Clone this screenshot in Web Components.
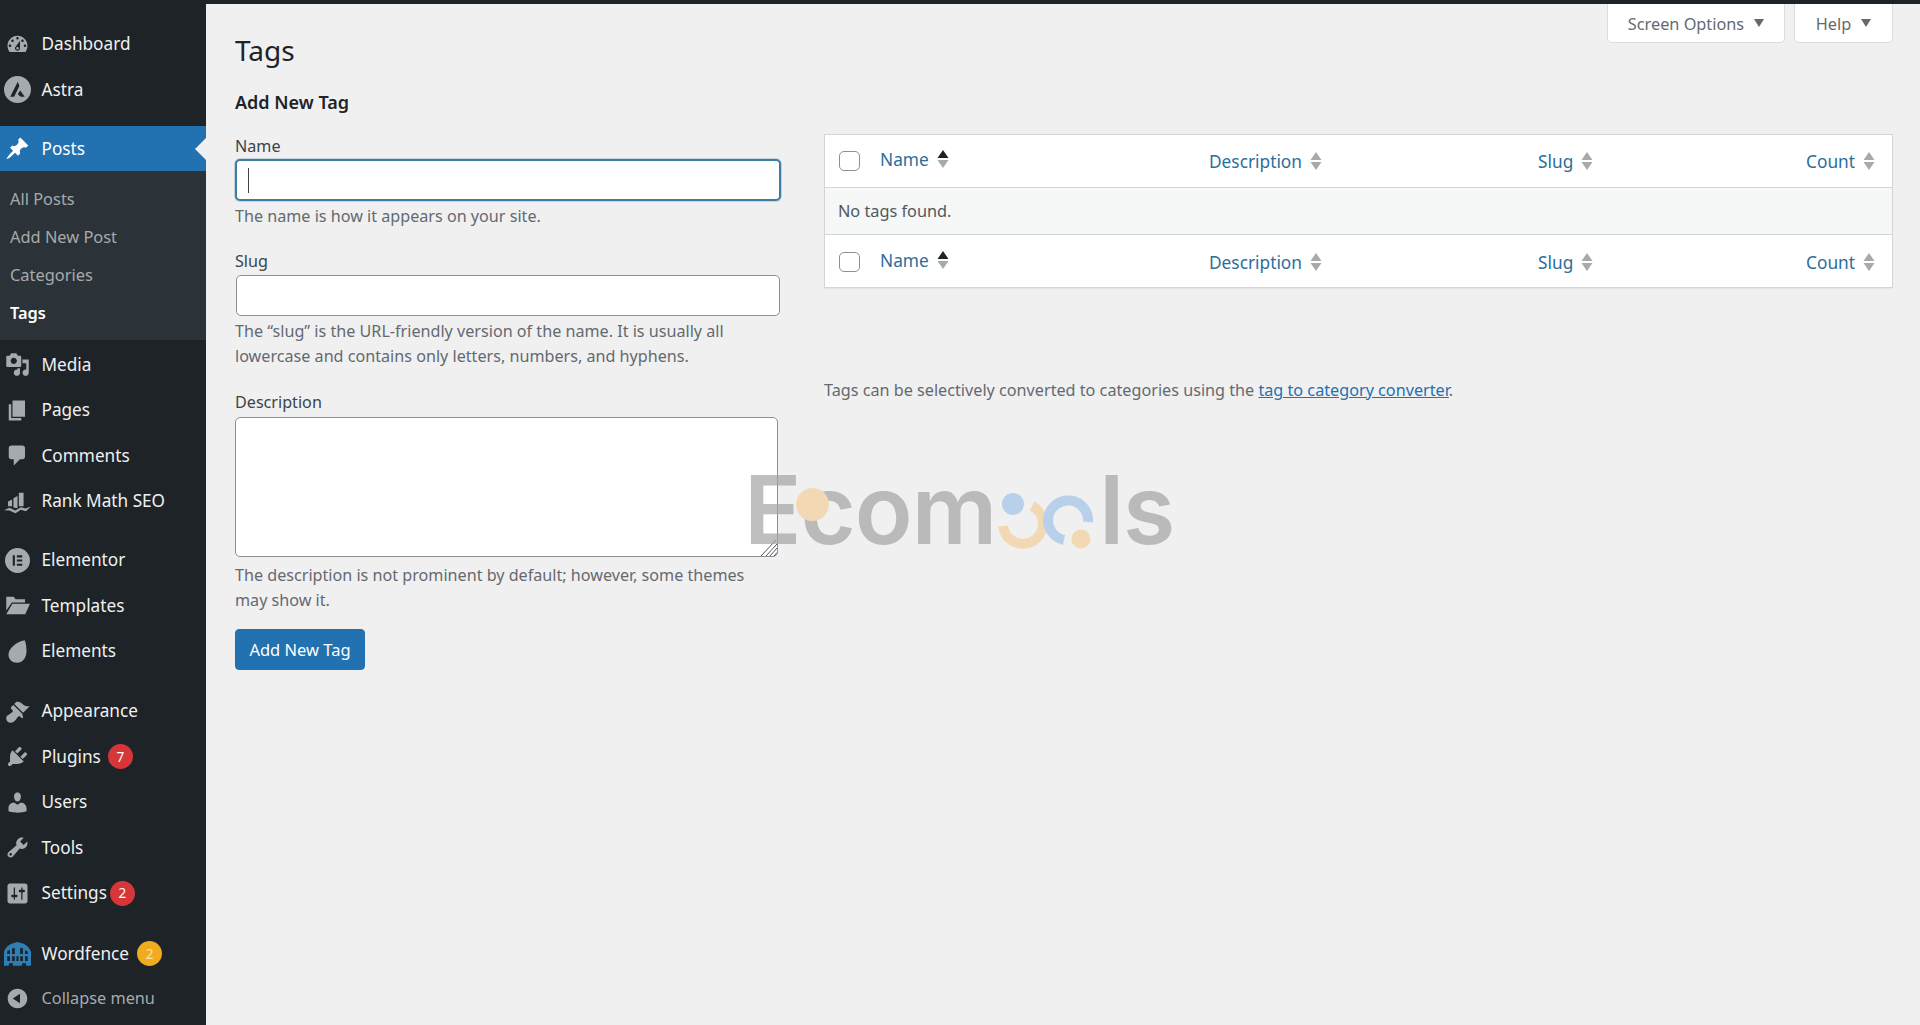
<!DOCTYPE html>
<html lang="en">
<head>
<meta charset="utf-8">
<title>Tags</title>
<style>
html, body { margin: 0; height: 100%; overflow: hidden; background: #f0f0f1; }
body { font-family: "Noto Sans", "Open Sans", sans-serif; color: #3c434a; }
</style>
</head>
<body>
<wp-shell>
  <wp-sidebar slot="side">
    <wp-menu-item label="Dashboard"><svg viewBox="0 0 20 20"><path d="M3.76 16h12.48c1.1-1.37 1.76-3.11 1.76-5 0-4.42-3.58-8-8-8s-8 3.58-8 8c0 1.89.66 3.63 1.76 5zM10 4c.55 0 1 .45 1 1s-.45 1-1 1-1-.45-1-1 .45-1 1-1zM6 6c.55 0 1 .45 1 1s-.45 1-1 1-1-.45-1-1 .45-1 1-1zm8 0c.55 0 1 .45 1 1s-.45 1-1 1-1-.45-1-1 .45-1 1-1zm-5.37 5.55L12 7v6c0 1.1-.9 2-2 2s-2-.9-2-2c0-.57.24-1.08.63-1.45zM4 10c.55 0 1 .45 1 1s-.45 1-1 1-1-.45-1-1 .45-1 1-1zm12 0c.55 0 1 .45 1 1s-.45 1-1 1-1-.45-1-1 .45-1 1-1zm-5 3c0-.55-.45-1-1-1s-1 .45-1 1 .45 1 1 1 1-.45 1-1z"/></svg></wp-menu-item>
    <wp-menu-item label="Astra"><svg viewBox="0 0 20 20" style="width:27px;height:27px"><path fill-rule="evenodd" d="M10 0a10 10 0 1 1 0 20a10 10 0 0 1 0-20zM10.200 4.200L4.600 15.400h2.900l3.900-8zM11.900 10.700l-1.700 2.900 2.200 1.800h3z"/></svg></wp-menu-item>
    <div class="sep"></div>
    <wp-menu-item label="Posts" active><svg viewBox="0 0 20 20"><path d="M10.44 3.02l1.82-1.82 6.36 6.35-1.83 1.82c-1.05-.68-2.48-.57-3.41.36l-.75.75c-.92.93-1.04 2.35-.35 3.41l-1.83 1.82-2.41-2.41-2.8 2.79c-.42.42-3.38 2.71-3.8 2.29s1.86-3.39 2.28-3.81l2.79-2.79L4.1 9.36l1.83-1.82c1.05.69 2.48.57 3.4-.36l.75-.75c.93-.92 1.05-2.35.36-3.41z"/></svg></wp-menu-item>
    <wp-submenu>
      <wp-sub-item>All Posts</wp-sub-item>
      <wp-sub-item>Add New Post</wp-sub-item>
      <wp-sub-item>Categories</wp-sub-item>
      <wp-sub-item current>Tags</wp-sub-item>
    </wp-submenu>
    <wp-menu-item label="Media"><svg viewBox="0 0 20 20"><path d="M13 11V4c0-.55-.45-1-1-1h-1.67L9 1H5L3.67 3H2c-.55 0-1 .45-1 1v7c0 .55.45 1 1 1h10c.55 0 1-.45 1-1zM7 4.500c1.38 0 2.500 1.120 2.500 2.500S8.380 9.500 7 9.500 4.500 8.380 4.500 7 5.620 4.500 7 4.500zM14 6h5v10.500c0 1.380-1.120 2.500-2.500 2.500S14 17.880 14 16.500s1.120-2.500 2.500-2.500c.17 0 .34.02.5.05V9h-3V6zm-4 8.050V13h2v3.500c0 1.380-1.120 2.500-2.500 2.500S7 17.880 7 16.500 8.120 14 9.500 14c.17 0 .34.02.5.05z"/></svg></wp-menu-item>
    <wp-menu-item label="Pages"><svg viewBox="0 0 20 20"><path d="M6 15V2h10v13H6zm-1 1h8v2H3V5h2v11z"/></svg></wp-menu-item>
    <wp-menu-item label="Comments"><svg viewBox="0 0 20 20"><path d="M5 2h9c1.1 0 2 .9 2 2v7c0 1.1-.9 2-2 2h-2l-5 5v-5H5c-1.1 0-2-.9-2-2V4c0-1.1.9-2 2-2z"/></svg></wp-menu-item>
    <wp-menu-item label="Rank Math SEO"><svg viewBox="0 0 20 20" style="width:27px;height:27px"><path d="M3 13.500V10l3-1.500v5zM7 14.500v-7l3-1.500v9zM11 13.500v-10h3.500v10zM0 16.500l4-1.800 4.500 2 4-2.500 3.500 1 4-1.500-3.800 3.500-3.700-1-4 2.500-4.500-2z"/></svg></wp-menu-item>
    <div class="sep"></div>
    <wp-menu-item label="Elementor"><svg viewBox="0 0 20 20"><path fill-rule="evenodd" d="M10 0a10 10 0 1 1 0 20a10 10 0 0 1 0-20zM6.200 5.800v8.400h1.700V5.800zM9.500 5.800v1.700h4.300V5.800zM9.500 9.200v1.600h4.300V9.200zM9.500 12.500v1.700h4.300v-1.700z"/></svg></wp-menu-item>
    <wp-menu-item label="Templates"><svg viewBox="0 0 20 20"><path d="M1 3h6l1.500 2H16v2.500H5.500L1 14zM5.900 8.600H20l-3.800 8.400H1z"/></svg></wp-menu-item>
    <wp-menu-item label="Elements"><svg viewBox="0 0 20 20"><path d="M15.800 1c.9 2.200 1.400 5.300 1.400 8.600 0 5.500-3 9.400-7.600 9.400-4 0-6.800-2.700-6.800-6.400C2.800 7.300 9.100 2.400 15.800 1z"/></svg></wp-menu-item>
    <div class="sep" style="height:14.500px"></div>
    <wp-menu-item label="Appearance"><svg viewBox="0 0 20 20"><path d="M14.480 11.060L7.410 3.990l1.500-1.500c.5-.56 2.300-.47 3.510.32 1.210.8 1.430 1.280 2.910 2.100 1.180.64 2.450 1.260 4.450.85zm-.71.71L6.700 4.700 4.930 6.470c-.39.39-.39 1.020 0 1.410l1.060 1.060c.39.39.39 1.030 0 1.420-.6.6-1.430 1.110-2.210 1.690-.35.26-.7.53-1.010.84C1.430 13.230 1 14.150 1 15.500 1 17.430 2.570 19 4.500 19c1.350 0 2.270-.43 3.610-1.770.31-.31.58-.66.84-1.010.58-.78 1.090-1.610 1.690-2.210.39-.39 1.030-.39 1.420 0l1.060 1.060c.39.39 1.020.39 1.410 0z"/></svg></wp-menu-item>
    <wp-menu-item label="Plugins" badge="7"><svg viewBox="0 0 20 20"><path d="M13.110 4.360L9.870 7.600 8 5.730l3.240-3.240c.35-.34 1.050-.2 1.560.32.52.51.66 1.210.31 1.550zm-8 1.770l.91-1.120 9.010 9.010-1.190.84c-.71.71-2.630 1.160-3.820 1.160H6.140L4.900 17.260c-.59.59-1.540.59-2.120 0-.59-.58-.59-1.530 0-2.120l1.240-1.240v-3.880c0-1.130.4-3.190 1.090-3.890zm7.260 3.970l3.240-3.240c.34-.35 1.040-.21 1.550.31.52.51.66 1.210.31 1.550l-3.240 3.250z"/></svg></wp-menu-item>
    <wp-menu-item label="Users"><svg viewBox="0 0 20 20"><path d="M10 9.250c-2.270 0-2.730-3.440-2.730-3.440C7 4.020 7.820 2 9.970 2c2.160 0 2.980 2.020 2.710 3.810 0 0-.41 3.440-2.680 3.440zm0 2.570L12.720 10c2.390 0 4.520 2.330 4.520 4.530v2.490s-3.650 1.130-7.240 1.130c-3.650 0-7.240-1.130-7.240-1.130v-2.490c0-2.250 1.940-4.480 4.470-4.480z"/></svg></wp-menu-item>
    <wp-menu-item label="Tools"><svg viewBox="0 0 20 20"><path d="M16.680 9.770c-1.340 1.340-3.300 1.670-4.950.99l-5.410 6.520c-.99.99-2.590.99-3.580 0s-.99-2.590 0-3.570l6.520-5.420c-.68-1.650-.35-3.610.99-4.950 1.280-1.280 3.120-1.620 4.720-1.060l-2.890 2.890 2.820 2.820 2.860-2.870c.53 1.580.18 3.390-1.080 4.650zM3.810 16.210c.4.39 1.040.39 1.430 0 .4-.4.4-1.040 0-1.430-.39-.4-1.030-.4-1.430 0-.39.39-.39 1.030 0 1.430z"/></svg></wp-menu-item>
    <wp-menu-item label="Settings" badge="2" tight><svg viewBox="0 0 20 20"><path d="M18 16V4c0-1.100-.9-2-2-2H4c-1.100 0-2 .9-2 2v12c0 1.100.9 2 2 2h12c1.100 0 2-.9 2-2zM8 11h1c.55 0 1 .45 1 1s-.45 1-1 1H8v1.500c0 .28-.22.5-.5.5s-.5-.22-.5-.5V13H6c-.55 0-1-.45-1-1s.45-1 1-1h1V5.500c0-.28.22-.5.5-.5s.5.22.5.5V11zm5-2h-1c-.55 0-1-.45-1-1s.45-1 1-1h1V5.500c0-.28.22-.5.5-.5s.5.22.5.5V7h1c.55 0 1 .45 1 1s-.45 1-1 1h-1v5.500c0 .28-.22.5-.5.5s-.5-.22-.5-.5V9z"/></svg></wp-menu-item>
    <div class="sep" style="height:15px"></div>
    <wp-menu-item label="Wordfence" badge="2" warn><svg viewBox="0 0 20 20" style="fill:#2d7fb5;width:27px;height:27px"><path fill-rule="evenodd" d="M0 8.500C1.500 5 3.500 3.500 6 2.500L10 1.500l4 1c2.500 1 4.500 2.500 6 6V19h-3.600v-1.800h-3V19H6.600v-1.800h-3V19H0zM2.400 8.500v1.800h2V7.500h-1.200zM6 6.200v4.100h2V6zM12 6v4.300h2V6.200zM15.600 7.500v2.800h2V8.500zM2.400 12v3.500h2V12zM6 12v3.500h2V12zM9.200 12v3.500h1.600V12zM12 12v3.500h2V12zM15.600 12v3.500h2V12z"/></svg></wp-menu-item>
    <wp-menu-item label="Collapse menu" dim style="margin-top:-1px"><svg viewBox="0 0 20 20"><path d="M10 2.160c4.330 0 7.840 3.510 7.840 7.840s-3.510 7.840-7.840 7.840S2.160 14.330 2.160 10 5.710 2.160 10 2.160zm2 11.720V6.120L6.180 9.970z"/></svg></wp-menu-item>
  </wp-sidebar>
  <wp-page-head slot="head" title="Tags"></wp-page-head>
  <wp-tag-form slot="form"></wp-tag-form>
  <wp-tags-table slot="table"></wp-tags-table>
  <wp-watermark slot="over"></wp-watermark>
</wp-shell>
<script>
class WpShell extends HTMLElement {
    constructor(){
        super();
        this.attachShadow({mode:'open'});
        this.shadowRoot.innerHTML = `
            <style>
                :host { display: flex; flex-direction: column; height: 1025px; position: relative; overflow: hidden; }
                .bar { height: 4px; background: #1d2327; flex: none; }
                .body { flex: 1; display: flex; min-height: 0; }
                .main { flex: 1; padding: 0 27px 0 29px; min-width: 0; }
                .cols { display: flex; gap: 43px; align-items: flex-start; }
            </style>
            <div class="bar"></div>
            <div class="body">
                <slot name="side"></slot>
                <div class="main">
                    <slot name="head"></slot>
                    <div class="cols">
                        <slot name="form"></slot>
                        <slot name="table"></slot>
                    </div>
                </div>
            </div>
            <slot name="over"></slot>
        `;
    }
}
customElements.define('wp-shell', WpShell);

class WpSidebar extends HTMLElement {
    constructor(){
        super();
        this.attachShadow({mode:'open'});
        this.shadowRoot.innerHTML = `
            <style>
                :host { display: block; width: 206px; flex: none; background: #1d2327; box-sizing: border-box; margin-top: -4px; padding-top: 21.300px; }
                ::slotted(.sep) { height: 13.700px; }
            </style>
            <slot></slot>
        `;
    }
}
customElements.define('wp-sidebar', WpSidebar);

class WpMenuItem extends HTMLElement {
    constructor(){
        super();
        this.attachShadow({mode:'open'});
        const badge = this.getAttribute('badge');
        this.shadowRoot.innerHTML = `
            <style>
                :host { display: flex; align-items: center; height: 45.500px; position: relative; color: #f0f0f1; font-size: 17.200px; }
                :host([active]) { background: #2271b1; color: #fff; }
                :host([active]) ::slotted(svg) { fill: #fff; }
                :host([active]) .text { padding-bottom: 0; }
                :host([active])::after { content: ""; position: absolute; right: 0; top: 12px; border: 11px solid transparent; border-right-color: #f0f0f1; border-left-width: 0; }
                :host([dim]) { color: #a7aaad; font-size: 16.300px; }
                .icon { width: 41.500px; flex: none; display: flex; justify-content: center; padding-right: 6px; box-sizing: border-box; }
                ::slotted(svg) { width: 25px; height: 25px; fill: #a7aaad; display: block; }
                .text { padding-bottom: 1px; }
                .badge { margin-left: 7px; width: 25px; height: 25px; border-radius: 50%; background: #d63638; color: #fff; font-size: 13.500px; display: flex; align-items: center; justify-content: center; }
                :host([tight]) .badge { margin-left: 3px; }
                :host([warn]) .badge { background: #f0ab1e; color: #fbe3ae; margin-left: 8px; }
            </style>
            <span class="icon"><slot></slot></span>
            <span class="text">${this.getAttribute('label')}</span>
            ${badge ? `<span class="badge">${badge}</span>` : ''}
        `;
    }
}
customElements.define('wp-menu-item', WpMenuItem);

class WpSubmenu extends HTMLElement {
    constructor(){
        super();
        this.attachShadow({mode:'open'});
        this.shadowRoot.innerHTML = `
            <style>
                :host { display: block; background: #2c3338; padding: 8px 0 9px; margin-bottom: 1.300px; }
            </style>
            <slot></slot>
        `;
    }
}
customElements.define('wp-submenu', WpSubmenu);

class WpSubItem extends HTMLElement {
    constructor(){
        super();
        this.attachShadow({mode:'open'});
        this.shadowRoot.innerHTML = `
            <style>
                :host { display: flex; align-items: center; height: 38px; padding-left: 10px; color: #a7aaad; font-size: 16.400px; }
                :host([current]) { color: #fff; font-weight: 600; }
            </style>
            <slot></slot>
        `;
    }
}
customElements.define('wp-sub-item', WpSubItem);

class WpPageHead extends HTMLElement {
    constructor(){
        super();
        this.attachShadow({mode:'open'});
        this.shadowRoot.innerHTML = `
            <style>
                :host { display: flex; justify-content: space-between; align-items: flex-start; height: 87px; }
                h1 { margin: 26px 0 0; font-size: 28px; font-weight: 400; line-height: 40px; color: #1d2327; }
                .tabs { display: flex; gap: 9px; }
                .tab { height: 39px; box-sizing: border-box; padding-top: 2px; background: #fff; border: 1px solid #dcdcde; border-top: 0; border-radius: 0 0 5px 5px; color: #646970; font-size: 16.300px; display: flex; align-items: center; justify-content: center; gap: 10px; }
                .screen { width: 178px; }
                .help { width: 99px; }
                .tab i { width: 0; height: 0; margin-top: -2px; border: 5.500px solid transparent; border-top: 8px solid #646970; border-bottom: 0; }
            </style>
            <h1>${this.getAttribute('title')}</h1>
            <div class="tabs">
                <div class="tab screen">Screen Options <i></i></div>
                <div class="tab help">Help <i></i></div>
            </div>
        `;
    }
}
customElements.define('wp-page-head', WpPageHead);

class WpTagForm extends HTMLElement {
    constructor(){
        super();
        this.attachShadow({mode:'open'});
        this.shadowRoot.innerHTML = `
            <style>
                :host { display: block; width: 546px; flex: none; font-size: 16.150px; }
                h2 { margin: 0 0 21px; font-size: 18px; line-height: 22px; font-weight: 600; color: #1d2327; }
                label { display: block; line-height: 24px; margin-bottom: 2px; color: #3c434a; }
                .first label { margin-bottom: 1px; }
                .desc label { margin-bottom: 3px; }
                .wrap { position: relative; }
                input, textarea { display: block; box-sizing: border-box; margin: 0 0 0 1px; background: #fff; border: 1px solid #8c8f94; border-radius: 5px; outline: 0; font: inherit; resize: none; }
                #name { width: 546px; height: 42px; margin-left: 0; border: 2px solid #3d7ca3; box-shadow: 0 0 0 1px #3d7ca340; }
                .caret { position: absolute; left: 13px; top: 9px; width: 1px; height: 25px; background: #3c434a; }
                #slug { width: 544px; height: 41px; }
                #desc { width: 543px; height: 140px; margin-left: 0; }
                .grip { position: absolute; right: 0; bottom: 0; width: 20px; height: 20px; }
                p { margin: 3px 0 0; line-height: 25.500px; color: #646970; }
                .desc p { margin-top: 6px; max-width: 530px; }
                .field { margin-bottom: 20px; }
                .first { margin-bottom: 19px; }
                button { margin-top: 15px; width: 130px; height: 41px; background: #2271b1; border: 1px solid #2271b1; border-radius: 4px; color: #fff; font: inherit; font-size: 16.500px; padding: 0; display: block; }
            </style>
            <h2>Add New Tag</h2>
            <div class="field first">
                <label>Name</label>
                <div class="wrap"><input id="name"><span class="caret"></span></div>
                <p>The name is how it appears on your site.</p>
            </div>
            <div class="field">
                <label>Slug</label>
                <input id="slug">
                <p>The “slug” is the URL-friendly version of the name. It is usually all lowercase and contains only letters, numbers, and hyphens.</p>
            </div>
            <div class="desc">
                <label>Description</label>
                <div class="wrap" style="width:543px">
                    <textarea id="desc"></textarea>
                    <svg class="grip" viewBox="0 0 20 20" fill="none" stroke="#50575e" stroke-width="1"><path d="M3 19L18 3M8 19L19 7M12 19l7-8M16 19l3-3.500"/></svg>
                </div>
                <p>The description is not prominent by default; however, some themes may show it.</p>
            </div>
            <button>Add New Tag</button>
        `;
    }
}
customElements.define('wp-tag-form', WpTagForm);

const sortIcon = up => `<svg width="12" height="20" viewBox="0 0 12 20"><path d="M6 1l5.500 8H.5z" fill="${up ? '#1d2327' : '#a7aaad'}"/><path d="M.5 11h11L6 19z" fill="#a7aaad"/></svg>`;

class WpTagsTable extends HTMLElement {
    constructor(){
        super();
        this.attachShadow({mode:'open'});
        const head = cls => `
            <div class="row ${cls}">
                <span class="box"></span>
                <a class="sort name">Name ${sortIcon(true)}</a>
                <a class="sort">Description ${sortIcon(false)}</a>
                <a class="sort">Slug ${sortIcon(false)}</a>
                <a class="sort count">Count ${sortIcon(false)}</a>
            </div>`;
        this.shadowRoot.innerHTML = `
            <style>
                :host { display: block; flex: 1; min-width: 0; font-size: 17.300px; }
                .table { margin-top: 43px; border: 1px solid #d3d5d8; background: #fff; box-shadow: 0 1px 1px rgba(0,0,0,.04); }
                .row { display: grid; grid-template-columns: 42px 329px 329px 1fr auto; align-items: center; box-sizing: border-box; }
                .row.top { height: 52px; border-bottom: 1px solid #d3d5d8; box-sizing: content-box; }
                .row.foot { height: 52px; padding-top: 2px; }
                .box { width: 21px; height: 20px; margin-left: 14px; box-sizing: border-box; background: #fff; border: 1px solid #8c8f94; border-radius: 5px; }
                .sort { display: flex; align-items: center; gap: 8px; padding-left: 13px; color: #2c6e9b; }
                .sort.name { transform: translateY(-2px); }
                .sort.count { padding-right: 17px; }
                .empty { height: 46px; border-bottom: 1px solid #d3d5d8; background: #f6f7f7; display: flex; align-items: center; padding-left: 13px; color: #50575e; font-size: 16.300px; }
                p { margin: 89px 0 0; line-height: 26px; font-size: 16.200px; color: #646970; }
                p a { color: #2271b1; text-decoration: underline; }
            </style>
            <div class="table">
                ${head('top')}
                <div class="empty">No tags found.</div>
                ${head('foot')}
            </div>
            <p>Tags can be selectively converted to categories using the <a>tag to category converter</a>.</p>
        `;
    }
}
customElements.define('wp-tags-table', WpTagsTable);

class WpWatermark extends HTMLElement {
    constructor(){
        super();
        this.attachShadow({mode:'open'});
        this.shadowRoot.innerHTML = `
            <style>
                :host { display: flex; position: absolute; left: 744px; top: 460px; height: 100px; align-items: baseline; pointer-events: none; font: 600 95px/100px Inter, sans-serif; color: rgba(160,160,160,.68); letter-spacing: -1px; }
                svg { width: 103px; height: 60px; flex: none; align-self: flex-end; overflow: visible; }
                .dot { position: absolute; left: 52px; top: 28px; width: 33px; height: 33px; border-radius: 50%; background: #f3d9b3; }
            </style>
            <span>Ecom</span>
            <svg viewBox="0 0 103 60" fill="none">
                <path d="M7 26A20 20 0 1 0 36 6" stroke="#f3d9b3" stroke-width="10"/>
                <circle cx="17" cy="4" r="11" fill="#b9d0ea"/>
                <path d="M68 40A20 20 0 1 1 92 22" stroke="#b9d0ea" stroke-width="10"/>
                <circle cx="85" cy="39" r="9.500" fill="#f3d9b3"/>
            </svg>
            <span>ls</span>
            <span class="dot"></span>
        `;
    }
}
customElements.define('wp-watermark', WpWatermark);
</script>
</body>
</html>
